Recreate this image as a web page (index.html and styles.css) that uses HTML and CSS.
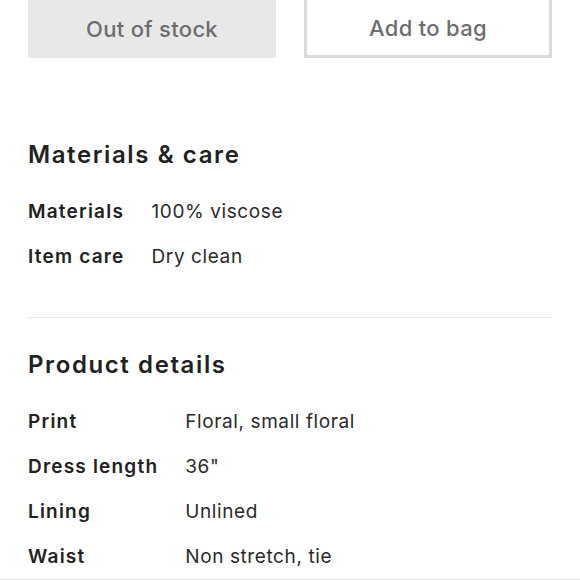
FILE: index.html
```html
<!DOCTYPE html>
<html lang="en">
<head>
<meta charset="utf-8">
<title>Product</title>
<link rel="stylesheet" href="styles.css">
</head>
<body>
<div class="page">
  <div class="actions">
    <button class="btn btn-disabled" type="button">Out of stock</button>
    <button class="btn btn-outline" type="button">Add to bag</button>
  </div>

  <section class="section section-materials">
    <h2 class="section-title">Materials &amp; care</h2>
    <dl class="specs">
      <dt class="spec-label">Materials</dt>
      <dd class="spec-value">100% viscose</dd>
      <dt class="spec-label">Item care</dt>
      <dd class="spec-value">Dry clean</dd>
    </dl>
  </section>

  <hr class="divider">

  <section class="section section-details">
    <h2 class="section-title">Product details</h2>
    <dl class="specs">
      <dt class="spec-label">Print</dt>
      <dd class="spec-value">Floral, small floral</dd>
      <dt class="spec-label">Dress length</dt>
      <dd class="spec-value">36"</dd>
      <dt class="spec-label">Lining</dt>
      <dd class="spec-value">Unlined</dd>
      <dt class="spec-label">Waist</dt>
      <dd class="spec-value">Non stretch, tie</dd>
    </dl>
  </section>
</div>
<div class="bottom-bar"></div>
</body>
</html>
```

FILE: styles.css
```css
html, body {
  margin: 0;
  padding: 0;
  background: #ffffff;
}

body {
  font-family: Inter, Lato, "Liberation Sans", sans-serif;
  color: #222222;
  height: 580px;
  overflow: hidden;
  display: flex;
  flex-direction: column;
}

.page {
  padding: 0 28px;
  flex: 1;
}

.actions {
  display: grid;
  grid-template-columns: 1fr 1fr;
  column-gap: 28px;
  margin-top: -12px;
}

.btn {
  height: 70px;
  padding: 12px 0 0;
  font-family: inherit;
  font-size: 22px;
  font-weight: 500;
  letter-spacing: 0.3px;
  color: #6d6d6d;
  border: 0;
  box-sizing: border-box;
  cursor: pointer;
}

.btn-disabled {
  background: #e8e8e8;
}

.btn-outline {
  background: #ffffff;
  border: 3px solid #dadada;
  padding-top: 9px;
}

.section-materials {
  margin-top: 82px;
}

.section-title {
  margin: 0;
  font-size: 24px;
  line-height: 30px;
  font-weight: 600;
  letter-spacing: 1.6px;
  color: #222222;
}

.specs {
  display: grid;
  grid-template-columns: max-content 1fr;
  column-gap: 27px;
  margin: 19px 0 0;
}

.spec-label,
.spec-value {
  margin: 0;
  font-size: 19px;
  line-height: 45px;
}

.spec-label {
  font-weight: 600;
  letter-spacing: 1.2px;
  color: #222222;
}

.spec-value {
  font-weight: 400;
  letter-spacing: 0.6px;
  color: #2a2a2a;
}

.divider {
  border: 0;
  border-top: 1px solid #ebebeb;
  margin: 38px 0 32px;
  height: 0;
}

.bottom-bar {
  height: 3px;
  background: #e2e2e2;
  flex: none;
}
```
